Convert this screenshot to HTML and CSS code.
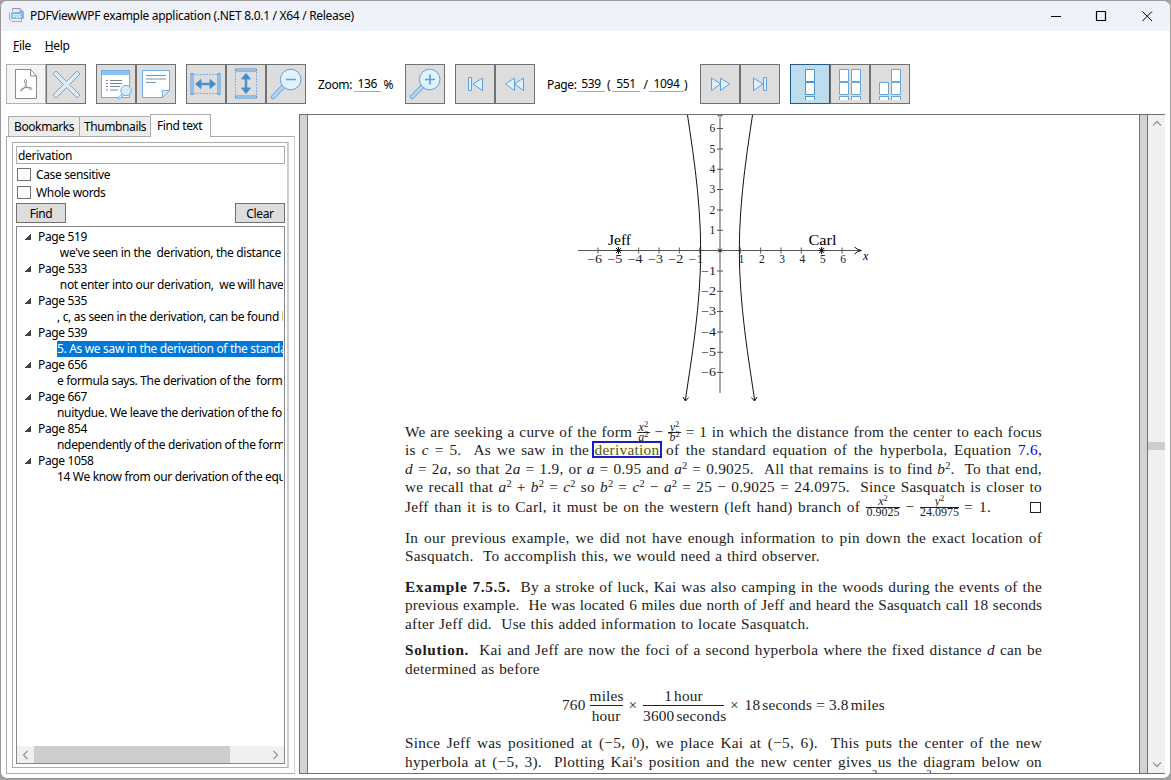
FILE: index.html
```html
<!DOCTYPE html>
<html lang="en">
<head>
<meta charset="utf-8">
<title>PDFViewWPF example application</title>
<link rel="stylesheet" href="styles.css">
</head>
<body>
<div class="window">
  <header class="titlebar">
    <svg class="app-icon" width="16" height="16" viewBox="0 0 16 16"><path d="M3.5 3V.5h7.500l3 3V5M11 .5v3h3" fill="#e8e9f6" stroke="#9993ad"/><path d="M.5 4.500V11l2.500 2.500h9.500V11" fill="#f5eff5" stroke="#c995a2"/><rect x="2" y="4" width="13" height="7" rx="1" fill="#78bce9"/><text x="3.600" y="9.600" class="app-icon-text">PDF</text></svg>
    <span class="title">PDFViewWPF example application (.NET 8.0.1 / X64 / Release)</span>
    <svg class="caption" width="98" height="12" viewBox="0 0 98 12" fill="none" stroke="#000"><path d="M0 6.500h10"/><rect x="45.500" y="1.500" width="9" height="9" rx=".6" stroke-width="1.200"/><path d="M91.500 1.500l9.500 9.500M101 1.500l-9.500 9.500"/></svg>
  </header>
  <nav class="menu"><span><u>F</u>ile</span><span><u>H</u>elp</span></nav>

  <div class="toolbar">
    <div class="group">
      <div class="tool disabled"><svg viewBox="0 0 40 40" fill="#fff" stroke="#8c8c8c"><path d="M9.500 5.500h15l6 6.500v22.500h-21z"/><path d="M24.500 5.500V12h6" fill="none"/><path d="M19.500 15.500c1.500 0 1 4 0 6-1 2.500-3.500 5.500-4.500 5.500s-.5-2 2-2.800 6-1.200 8-.4.500 2.200-1.200 1.400-4.300-3.600-4.900-6.400-.2-3.300.6-3.300z" fill="none"/></svg></div>
      <div class="tool"><svg viewBox="0 0 40 40" fill="#d8ecfc" stroke="#6ea9dc"><path d="M10 7l10.500 10.500L31 7l3 3-10.500 10.500L34 31l-3 3-10.500-10.500L10 34l-3-3 10.500-10.500L7 10z"/></svg></div>
    </div>
    <div class="group">
      <div class="tool"><svg viewBox="0 0 40 40" fill="none" stroke="#6faee4"><rect x="5.500" y="6.500" width="28" height="27" fill="#fff"/><path d="M6 7h27v4H6z" fill="#8dc4f5" stroke="none"/><path d="M10 16.500h2m2 0h12M10 19.500h2m2 0h12M10 22.500h2m2 0h10M10 26h2m2 0h8" stroke="#76869c"/><path d="M26 30l-4.500 4 1.500 1.500 5-4.500z" fill="#d8ecfc"/><circle cx="30" cy="26.500" r="5.200" fill="#d8ecfc"/></svg></div>
      <div class="tool"><svg viewBox="0 0 40 40" fill="#fff" stroke="#6faee4"><path d="M6.500 6.500h27v20l-7 7h-20z"/><path d="M33.500 26.500h-7v7z" fill="#d8ecfc"/><path d="M10 11.500h20M10 15h20M10 18.500h10" stroke="#7893b7"/></svg></div>
    </div>
    <div class="group">
      <div class="tool"><svg viewBox="0 0 40 40" fill="#d8ecfc" stroke="#4f93d0"><path d="M8 10.500h24M8 29.500h24" stroke-dasharray="2 1" stroke="#7fb2e2"/><path d="M5.500 9.500h2v21h-2zM32.500 9.500h2v21h-2z" transform="translate(-.5 0)"/><path d="M14 20h12" stroke-width="2.600"/><path d="M9.500 20l5.500-4.500v9zM29.500 20l-5.500-4.500v9z" fill="#438bcc"/></svg></div>
      <div class="tool"><svg viewBox="0 0 40 40" fill="#d8ecfc" stroke="#4f93d0"><path d="M9.500 8v24M30.500 8v24" stroke-dasharray="2 1" stroke="#7fb2e2"/><path d="M9.500 5.500h21v2h-21zM9.500 32.500h21v2h-21z" transform="translate(0 -.5)"/><path d="M20 14v12" stroke-width="2.600"/><path d="M20 9.500l-4.500 5.500h9zM20 29.500l-4.500-5.500h9z" fill="#438bcc"/></svg></div>
      <div class="tool"><svg viewBox="0 0 40 40" fill="#b3d5f2" stroke="#5f9fd9"><path d="M16.500 20.500L5.500 32c-1 2 1 3.500 2.500 2.500l11.500-11.500z"/><circle cx="24.700" cy="15.500" r="10.300" fill="#e0f2ff"/><path d="M20 15.500h10" stroke-width="1.700"/></svg></div>
    </div>
    <div class="zoom-label">Zoom: <span class="field zoom">136</span> %</div>
    <div class="group"><div class="tool"><svg viewBox="0 0 40 40" fill="#b3d5f2" stroke="#5f9fd9"><path d="M16.500 20.500L5.500 32c-1 2 1 3.500 2.500 2.500l11.500-11.500z"/><circle cx="24.700" cy="15.500" r="10.300" fill="#e0f2ff"/><path d="M20 15.500h10M25 10.500v10" stroke-width="1.700"/></svg></div></div>
    <div class="group">
      <div class="tool"><svg viewBox="0 0 40 40" fill="#dff1ff" stroke="#5f9fd9"><path d="M13.500 13.500h3v13h-3zM27.500 14v12.500L18 20z"/></svg></div>
      <div class="tool"><svg viewBox="0 0 40 40" fill="#dff1ff" stroke="#5f9fd9"><path d="M19.500 14v12.500L10.500 20zM28.500 14v12.500L19.500 20z"/></svg></div>
    </div>
    <div class="page-label"><span class="pg">Page:</span><span class="field">539</span><span class="sep">(</span><span class="field">551</span><span class="sep slash">/</span><span class="field wide">1094</span><span>)</span></div>
    <div class="group">
      <div class="tool"><svg viewBox="0 0 40 40" fill="#dff1ff" stroke="#5f9fd9"><path d="M11.500 14v12.500L20.500 20zM20.500 14v12.500L29.500 20z"/></svg></div>
      <div class="tool"><svg viewBox="0 0 40 40" fill="#dff1ff" stroke="#5f9fd9"><path d="M13.500 14v12.500L23 20zM23.500 13.500h3v13h-3z"/></svg></div>
    </div>
    <div class="group">
      <div class="tool active"><svg viewBox="0 0 40 40" fill="#fff" stroke="#4b93cd"><path d="M15.500 5.500h9v12h-9zM15.500 18.500h9v12h-9zM15.500 36v-3.500h9V36"/></svg></div>
      <div class="tool"><svg viewBox="0 0 40 40" fill="#fff" stroke="#68a5da"><path d="M9.500 5.500h9v12h-9zM9.500 18.500h9v12h-9zM9.500 36v-3.500h9V36M21.500 5.500h9v12h-9zM21.500 18.500h9v12h-9zM21.500 36v-3.500h9V36"/></svg></div>
      <div class="tool"><svg viewBox="0 0 40 40" fill="#fff" stroke="#68a5da"><path d="M9.500 18.500h9v12h-9zM9.500 36v-3.500h9V36M21.500 5.500h9v12h-9zM21.500 18.500h9v12h-9zM21.500 36v-3.500h9V36"/></svg></div>
    </div>
  </div>

  <main class="content">
    <aside class="sidebar">
      <div class="tabs"><div class="tab">Bookmarks</div><div class="tab second">Thumbnails</div><div class="tab selected">Find text</div></div>
      <div class="tab-panel"><div class="find-panel">
        <div class="search">derivation</div>
        <div class="check"><i></i>Case sensitive</div>
        <div class="check"><i></i>Whole words</div>
        <div class="buttons"><button>Find</button><button>Clear</button></div>
        <div class="tree">
          <div class="rows">
            <div class="node">Page 519</div><div class="hit"> we've seen in the  derivation, the distance</div>
            <div class="node">Page 533</div><div class="hit"> not enter into our derivation,  we will have</div>
            <div class="node">Page 535</div><div class="hit">, c, as seen in the derivation, can be found b</div>
            <div class="node">Page 539</div><div class="hit chosen">5. As we saw in the derivation of the standa</div>
            <div class="node">Page 656</div><div class="hit">e formula says. The derivation of the  formu</div>
            <div class="node">Page 667</div><div class="hit">nuitydue. We leave the derivation of the fo</div>
            <div class="node">Page 854</div><div class="hit">ndependently of the derivation of the form</div>
            <div class="node">Page 1058</div><div class="hit">14 We know from our derivation of the equ</div>
          </div>
          <div class="hscroll"><svg width="17" height="17" fill="none" stroke="#999" stroke-width="1.300"><path d="M10.500 5l-4 4 4 4"/></svg><div class="hthumb"></div><svg width="17" height="17" fill="none" stroke="#999" stroke-width="1.300"><path d="M6.500 5l4 4-4 4"/></svg></div>
        </div>
      </div></div>
    </aside>

    <section class="viewer">
      <article class="page">
        <svg class="graph" width="637" height="308" viewBox="405 115 637 308">
          <g fill="none" stroke="#555" stroke-width="1">
            <path d="M578 250.500h282M720 115v278"/>
            <path d="M598 247.500v6M618.300 247.500v6M638.700 247.500v6M659 247.500v6M679.300 247.500v6M699.700 247.500v6M740.300 247.500v6M760.700 247.500v6M781 247.500v6M801.300 247.500v6M821.700 247.500v6M842 247.500v6"/>
            <path d="M717 128.500h6M717 149h6M717 169.300h6M717 189.500h6M717 210h6M717 230.300h6M717 271h6M717 291.300h6M717 311.500h6M717 332h6M717 352.300h6M717 372.500h6"/>
          </g>
          <g fill="none" stroke="#111" stroke-width="1">
            <path d="M687.500 115l2.300 15.500 2.900 20 2.600 20 2.200 20 1.700 20 1.100 20 .4 20-.4 20-1.100 20-1.700 20-2.200 20-2.600 20-2.900 20-4.500 30"/>
            <path d="M752.500 115l-2.300 15.500-2.900 20-2.600 20-2.200 20-1.700 20-1.100 20-.4 20 .4 20 1.100 20 1.700 20 2.200 20 2.600 20 2.900 20 4.500 30"/>
            <path d="M683 397l2.500 4 3-3.500M757 397l-2.500 4-3-3.500M854.500 247q3 3 7 3.500-4 .5-7 3.500M717.500 116l1.500-1M722.500 116l-1.500-1"/>
            <path d="M616 248l5 5m0-5l-5 5m2.500-6v7m-3.500-3.500h7M819.200 248l5 5m0-5l-5 5m2.500-6v7m-3.500-3.500h7M718 248.500l4 4m0-4l-4 4"/>
          </g>
          <g class="ticks">
            <text x="587" y="263" textLength="15" lengthAdjust="spacingAndGlyphs">−6</text><text x="607.300" y="263" textLength="15" lengthAdjust="spacingAndGlyphs">−5</text><text x="627.600" y="263" textLength="15" lengthAdjust="spacingAndGlyphs">−4</text><text x="648" y="263" textLength="15" lengthAdjust="spacingAndGlyphs">−3</text><text x="668.300" y="263" textLength="15" lengthAdjust="spacingAndGlyphs">−2</text><text x="688.600" y="263" textLength="15" lengthAdjust="spacingAndGlyphs">−1</text>
            <text x="738.500" y="263">1</text><text x="759" y="263">2</text><text x="779.300" y="263">3</text><text x="799.600" y="263">4</text><text x="820" y="263">5</text><text x="840.300" y="263">6</text>
          </g>
          <g class="ticks">
            <text x="709.500" y="132">6</text><text x="709.500" y="152.500">5</text><text x="709.500" y="172.800">4</text><text x="709.500" y="193">3</text><text x="709.500" y="213.500">2</text><text x="709.500" y="234">1</text>
            <text x="701" y="274.500" textLength="15" lengthAdjust="spacingAndGlyphs">−1</text><text x="701" y="294.800" textLength="15" lengthAdjust="spacingAndGlyphs">−2</text><text x="701" y="315" textLength="15" lengthAdjust="spacingAndGlyphs">−3</text><text x="701" y="335.500" textLength="15" lengthAdjust="spacingAndGlyphs">−4</text><text x="701" y="355.800" textLength="15" lengthAdjust="spacingAndGlyphs">−5</text><text x="701" y="376" textLength="15" lengthAdjust="spacingAndGlyphs">−6</text>
          </g>
          <text class="axis" x="863" y="260">x</text>
          <text class="name" x="608" y="245" textLength="23" lengthAdjust="spacingAndGlyphs">Jeff</text><text class="name" x="808.500" y="245" textLength="28" lengthAdjust="spacingAndGlyphs">Carl</text>
        </svg>

        <div class="para first">
          <div class="line">We are seeking a curve of the form <span class="frac"><span><i>x</i><sup>2</sup></span><span><i>a</i><sup>2</sup></span></span> − <span class="frac"><span><i>y</i><sup>2</sup></span><span><i>b</i><sup>2</sup></span></span> = 1 in which the distance from the center to each focus</div>
          <div class="line split"><span class="before">is <i>c</i> = 5. &nbsp;As we saw in the</span><span class="found">derivation</span><span class="after">of the standard equation of the hyperbola, Equation <span class="ref">7.6</span>,</span></div>
          <div class="line"><i>d</i> = 2<i>a</i>, so that 2<i>a</i> = 1.9, or <i>a</i> = 0.95 and <i>a</i><sup>2</sup> = 0.9025. &nbsp;All that remains is to find <i>b</i><sup>2</sup>. &nbsp;To that end,</div>
          <div class="line">we recall that <i>a</i><sup>2</sup> + <i>b</i><sup>2</sup> = <i>c</i><sup>2</sup> so <i>b</i><sup>2</sup> = <i>c</i><sup>2</sup> − <i>a</i><sup>2</sup> = 25 − 0.9025 = 24.0975. &nbsp;Since Sasquatch is closer to</div>
          <div class="line tall"><span class="jeff">Jeff than it is to Carl, it must be on the western (left hand) branch of</span><span class="frac wide1"><span><i>x</i><sup>2</sup></span><span>0.9025</span></span><span class="minus">−</span><span class="frac wide2"><span><i>y</i><sup>2</sup></span><span>24.0975</span></span><span class="equals">= 1.</span><b class="qed"></b></div>
        </div>
        <div class="para second">
          <div class="line">In our previous example, we did not have enough information to pin down the exact location of</div>
          <div class="line short">Sasquatch. &nbsp;To accomplish this, we would need a third observer.</div>
        </div>
        <div class="para third">
          <div class="line"><b class="lead">Example 7.5.5.</b> &nbsp;By a stroke of luck, Kai was also camping in the woods during the events of the</div>
          <div class="line dense">previous example. &nbsp;He was located 6 miles due north of Jeff and heard the Sasquatch call 18 seconds</div>
          <div class="line short">after Jeff did. &nbsp;Use this added information to locate Sasquatch.</div>
        </div>
        <div class="para fourth">
          <div class="line"><b class="lead">Solution.</b> &nbsp;Kai and Jeff are now the foci of a second hyperbola where the fixed distance <i>d</i> can be</div>
          <div class="line short">determined as before</div>
        </div>
        <div class="equation"><span>760</span><span class="bigfrac"><span>miles</span><span>hour</span></span><span class="times">×</span><span class="bigfrac wide-frac"><span>1 hour</span><span>3600 seconds</span></span><span class="times">×</span><span class="result"><span>18 seconds</span> = <span>3.8 miles</span></span></div>
        <div class="para fifth">
          <div class="line">Since Jeff was positioned at (−5, 0), we place Kai at (−5, 6). &nbsp;This puts the center of the new</div>
          <div class="line">hyperbola at (−5, 3). &nbsp;Plotting Kai's position and the new center gives us the diagram below on</div>
          <div class="cut"><span>(<i>y</i>−3)<sup>2</sup></span><span>(<i>x</i>+5)<sup>2</sup></span></div>
        </div>
      </article>
      <div class="vscroll"><svg width="17" height="17" fill="none" stroke="#999" stroke-width="1.300"><path d="M5 10.500l4-4 4 4"/></svg><div class="vthumb"></div><svg width="17" height="17" fill="none" stroke="#999" stroke-width="1.300"><path d="M5 6.500l4 4 4-4"/></svg></div>
    </section>
  </main>
</div>
</body>
</html>
```

FILE: styles.css
```css
* { box-sizing: border-box; }
body { margin: 0; background: #a3a3a3; font: 12px/16px "Noto Sans", sans-serif; color: #000; letter-spacing: -.35px; overflow: hidden; }
.window { width: 1170px; height: 779px; border: 1px solid #999; border-width: 1px 0 1px 1px; border-radius: 7px; background: #fff; overflow: hidden; display: flex; flex-direction: column; }
.titlebar { height: 30px; flex: none; background: #f0f2fa; display: flex; align-items: center; padding-left: 8px; }
.app-icon { margin-right: 5px; }
.app-icon-text { font: bold 4.500px "Liberation Sans", sans-serif; fill: #fff; letter-spacing: 0; }
.title { flex: 1; letter-spacing: -.3px; }
.caption { margin-right: 21px; overflow: visible; }
.menu { height: 33px; flex: none; display: flex; gap: 14px; padding: 7px 0 0 12px; }
.toolbar { height: 50px; flex: none; display: flex; padding-left: 5px; align-items: flex-start; }
.group { display: flex; margin-right: 10px; }
.tool { width: 40px; height: 40px; border: 1px solid #707070; background: #ddd; }
.tool svg { display: block; width: 40px; height: 40px; margin: -1px; }
.tool.disabled { background: #f4f4f4; border-color: #adb2b5; }
.tool.active { background: #bcddee; border-color: #245a83; }
.zoom-label { width: 87px; margin-left: 2px; padding-top: 13px; white-space: nowrap; height: 40px; }
.field { display: inline-block; border-bottom: 1px solid #abadb3; height: 15px; line-height: 14px; width: 28px; text-align: center; vertical-align: top; }
.field.zoom { width: 27px; margin: 0 0 0 -1px; }
.page-label { display: flex; width: 153px; margin-left: 2px; padding-top: 13px; }
.pg { width: 30px; }
.sep { width: 7px; padding-left: 2px; }
.slash { width: 9px; text-align: center; }
.field.wide { width: 35px; }
.content { flex: 1; min-height: 0; display: flex; padding: 0 5px 4px 5px; }
.sidebar { width: 289px; display: flex; flex-direction: column; }
.tabs { display: flex; height: 22px; align-items: flex-end; padding-left: 2px; position: relative; z-index: 1; }
.tab { width: 72px; height: 20px; border: 1px solid #acacac; border-bottom: 0; background: #ededed; margin-right: -1px; line-height: 20px; padding-left: 5px; white-space: nowrap; letter-spacing: -.4px; }
.tab.second { width: 73px; padding-left: 4px; }
.tab.selected { width: 61px; height: 23px; margin: 0 0 -1px -1px; background: #fff; padding-left: 6px; line-height: 22px; }
.tab-panel { flex: 1; min-height: 0; border: 1px solid #acacac; border-right-color: #d5d5d5; padding: 5px; }
.find-panel { height: 100%; border: 1px solid #acacac; border-right: 2px solid #ccc; padding: 3px 2px 3px 3px; display: flex; flex-direction: column; }
.search { height: 18px; border: 1px solid #abadb3; padding-left: 1px; line-height: 17px; margin-bottom: 2px; flex: none; letter-spacing: -.3px; }
.check { height: 18px; display: flex; align-items: center; flex: none; padding-left: 1px; }
.check i { width: 14px; height: 13px; border: 1px solid #707070; margin: -1px 5px 0 0; }
.buttons { display: flex; justify-content: space-between; margin: 1px 0 3px; height: 20px; flex: none; }
button { width: 50px; height: 20px; border: 1px solid #707070; background: #ddd; padding: 1px 0 0; font: inherit; letter-spacing: inherit; color: inherit; }
.tree { flex: 1; min-height: 0; border: 1px solid #828790; display: flex; flex-direction: column; padding: 2px 0 0; }
.rows { flex: 1; overflow: hidden; margin-right: 1px; }
.node { height: 16px; padding-left: 21px; background: linear-gradient(135deg, transparent 50%, #444 51%) 7px 4px / 7px 7px no-repeat; }
.hit { height: 16px; margin-left: 40px; white-space: pre; overflow: hidden; letter-spacing: -.33px; }
.chosen { background: #0078d7; color: #fff; }
.hscroll { height: 17px; background: #f0f0f0; display: flex; flex: none; }
.hthumb { width: 196px; background: #cdcdcd; margin-right: 37px; }
.hscroll svg { flex: none; }
.viewer { flex: 1; margin-left: 4px; display: flex; background: #d3d3d3; border: 1px solid #707070; border-right: 0; overflow: hidden; }
.page { width: 833px; margin-left: 7px; padding-left: 97px; background: #fff; border: 1px solid #777; border-width: 0 1px; overflow: hidden; font: 15.300px/18.500px "Liberation Serif", serif; color: #1c1c1c; letter-spacing: .27px; }
.graph { display: block; }
.ticks { font-size: 11.500px; fill: #222; letter-spacing: 0; }
.axis { font: italic 12px "Liberation Serif", serif; }
.name { font-size: 15px; letter-spacing: 0; }
.para { width: 637px; }
.line { height: 18.400px; white-space: nowrap; text-align: justify; text-align-last: justify; }
.dense { letter-spacing: .1px; }
.short { text-align-last: left; word-spacing: .6px; }
.lead { letter-spacing: .65px; }
.split { display: flex; }
.before { width: 184px; margin-right: 3px; letter-spacing: .15px; }
.after { flex: 1; margin-left: 4px; }
.tall { height: 21px; padding-top: 1.500px; display: flex; }
.jeff { width: 455px; margin-right: 6px; }
.para sup { font-size: 10.500px; line-height: 0; vertical-align: 5px; letter-spacing: 0; }
.frac { display: inline-flex; flex-direction: column; vertical-align: middle; font-size: 12px; line-height: 9.500px; height: 20px; margin: -4px 0 -3px; text-align: center; text-align-last: center; letter-spacing: 0; min-width: 13px; }
.tall .frac { margin-top: -1px; }
.frac > span + span { border-top: 1px solid #222; }
.para .frac sup { font-size: 8.500px; vertical-align: 4px; }
.wide1 { width: 34px; }
.wide2 { width: 39px; }
.minus { width: 20px; text-align-last: center; }
.equals { margin-left: 5px; width: 27px; }
.found { width: 70px; height: 17px; line-height: 14px; border: 2px solid #1b1bd0; background: #ffffe1; color: #55552d; margin-top: 0; text-align-last: center; letter-spacing: .3px; }
.ref { color: #00f; }
.qed { width: 11px; height: 11px; border: 1px solid #222; margin: 4px 1px 0 auto; }
.second { margin-top: 11px; }
.third { margin-top: 12.600px; }
.fourth { margin-top: 8px; }
.equation { display: flex; align-items: center; height: 42px; margin: 6.500px 0 8px 157px; white-space: nowrap; letter-spacing: .2px; }
.bigfrac { display: flex; flex-direction: column; text-align: center; width: 33px; margin-left: 4px; line-height: 19px; word-spacing: -2px; }
.bigfrac span + span { border-top: 1px solid #222; }
.wide-frac { width: 81px; margin-left: 0; }
.times { width: 20.500px; text-align: center; }
.result span { word-spacing: -2px; }
.cut { height: 18px; padding: 0 0 0 443px; font-size: 11px; line-height: 15px; letter-spacing: 0; display: flex; gap: 25px; }
.vscroll { width: 18px; margin-left: 7px; border-left: 1px solid #707070; background: #f0f0f0; display: flex; flex-direction: column; }
.vscroll svg { flex: none; }
.vthumb { height: 8px; background: #cdcdcd; margin: 310px 0 auto; flex: none; }
```
